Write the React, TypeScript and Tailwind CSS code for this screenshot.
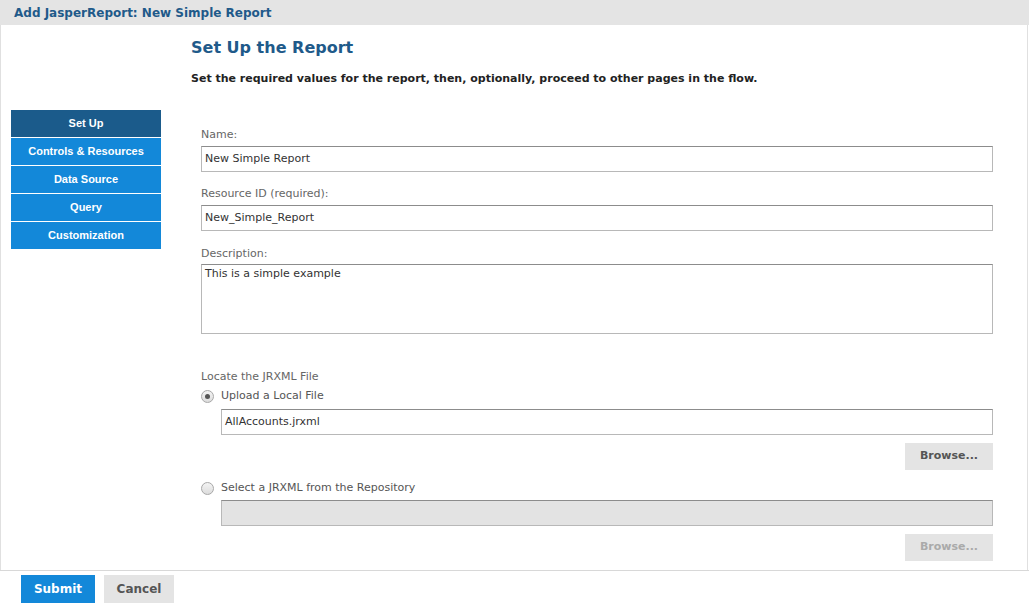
import React from 'react';

const font = "font-['DejaVu_Sans',Verdana,sans-serif]";

const steps = ['Set Up', 'Controls & Resources', 'Data Source', 'Query', 'Customization'];

const Label: React.FC<{ children: React.ReactNode; className?: string }> = ({ children, className = '' }) => (
  <div className={`text-[11px] leading-[14px] text-[#666] ${className}`}>{children}</div>
);

const TextInput: React.FC<{ value: string; className?: string; disabled?: boolean }> = ({ value, className = '', disabled }) => (
  <div
    className={`h-[26px] border border-[#b8b8b8] border-t-[#8c8c8c] px-[3px] flex items-center text-[11px] text-[#333] ${
      disabled ? 'bg-[#e3e3e3]' : 'bg-white'
    } ${className}`}
  >
    {value}
  </div>
);

const Radio: React.FC<{ checked?: boolean }> = ({ checked }) => (
  <span className="w-[13px] h-[13px] rounded-full border border-[#a8a8a8] bg-gradient-to-b from-[#f4f4f4] to-[#dcdcdc] flex items-center justify-center">
    {checked && <span className="w-[5px] h-[5px] rounded-full bg-[#555]" />}
  </span>
);

const App: React.FC = () => {
  return (
    <div className={`w-[1029px] h-[607px] bg-white flex flex-col overflow-hidden ${font}`}>
      {/* Header */}
      <div className="h-[25px] bg-[#e4e4e4] flex items-center pl-[14px] shrink-0">
        <span className="text-[12px] font-bold text-[#1f5a8a]">Add JasperReport: New Simple Report</span>
      </div>

      <div className="flex-1 flex border-l border-r border-[#e0e0e0] mr-[1px]">
        {/* Left nav */}
        <div className="w-[190px] shrink-0 pl-[10px] pt-[85px]">
          <div className="w-[150px] flex flex-col gap-[1px] font-['Liberation_Sans',Arial,sans-serif]">
            {steps.map((s, i) => (
              <div
                key={s}
                className={`h-[27px] flex items-center justify-center text-[11px] font-bold text-white ${
                  i === 0 ? 'bg-[#1b5b8b]' : 'bg-[#1388d9]'
                }`}
              >
                {s}
              </div>
            ))}
          </div>
        </div>

        {/* Main */}
        <div className="flex-1 pr-[34px]">
          <h1 className="text-[16px] font-bold text-[#1f5a8a] mt-[12px] leading-[22px]">Set Up the Report</h1>
          <p className="text-[11px] font-bold text-[#222] mt-[13px] leading-[14px]">
            Set the required values for the report, then, optionally, proceed to other pages in the flow.
          </p>

          <div className="pl-[10px] mt-[42px]">
            <Label>Name:</Label>
            <TextInput value="New Simple Report" className="mt-[4px]" />

            <Label className="mt-[15px]">Resource ID (required):</Label>
            <TextInput value="New_Simple_Report" className="mt-[4px]" />

            <Label className="mt-[16px]">Description:</Label>
            <div className="mt-[3px] h-[70px] border border-[#b8b8b8] border-t-[#8c8c8c] px-[3px] pt-[1px] text-[11px] text-[#333]">
              This is a simple example
            </div>

            <Label className="mt-[36px]">Locate the JRXML File</Label>
            <div className="flex items-center gap-[7px] mt-[5px] h-[14px]">
              <Radio checked />
              <span className="text-[11px] text-[#555]">Upload a Local File</span>
            </div>
            <div className="pl-[20px] mt-[6px]">
              <TextInput value="AllAccounts.jrxml" />
              <div className="flex justify-end mt-[8px]">
                <div className="w-[88px] h-[27px] bg-[#e4e4e4] flex items-center justify-center text-[11px] font-bold text-[#555]">
                  Browse...
                </div>
              </div>
            </div>

            <div className="flex items-center gap-[7px] mt-[11px] h-[14px]">
              <Radio />
              <span className="text-[11px] text-[#555]">Select a JRXML from the Repository</span>
            </div>
            <div className="pl-[20px] mt-[5px]">
              <TextInput value="" disabled />
              <div className="flex justify-end mt-[8px]">
                <div className="w-[88px] h-[27px] bg-[#e4e4e4] flex items-center justify-center text-[11px] font-bold text-[#aaa]">
                  Browse...
                </div>
              </div>
            </div>
          </div>
        </div>
      </div>

      {/* Footer */}
      <div className="h-[37px] shrink-0 border-t border-[#d8d8d8] flex items-start gap-[9px] pl-[21px] pt-[4px]">
        <div className="w-[74px] h-[28px] bg-[#1388d9] flex items-center justify-center text-[12px] font-bold text-white">
          Submit
        </div>
        <div className="w-[70px] h-[28px] bg-[#e4e4e4] flex items-center justify-center text-[12px] font-bold text-[#555]">
          Cancel
        </div>
      </div>
    </div>
  );
};

export default App;
